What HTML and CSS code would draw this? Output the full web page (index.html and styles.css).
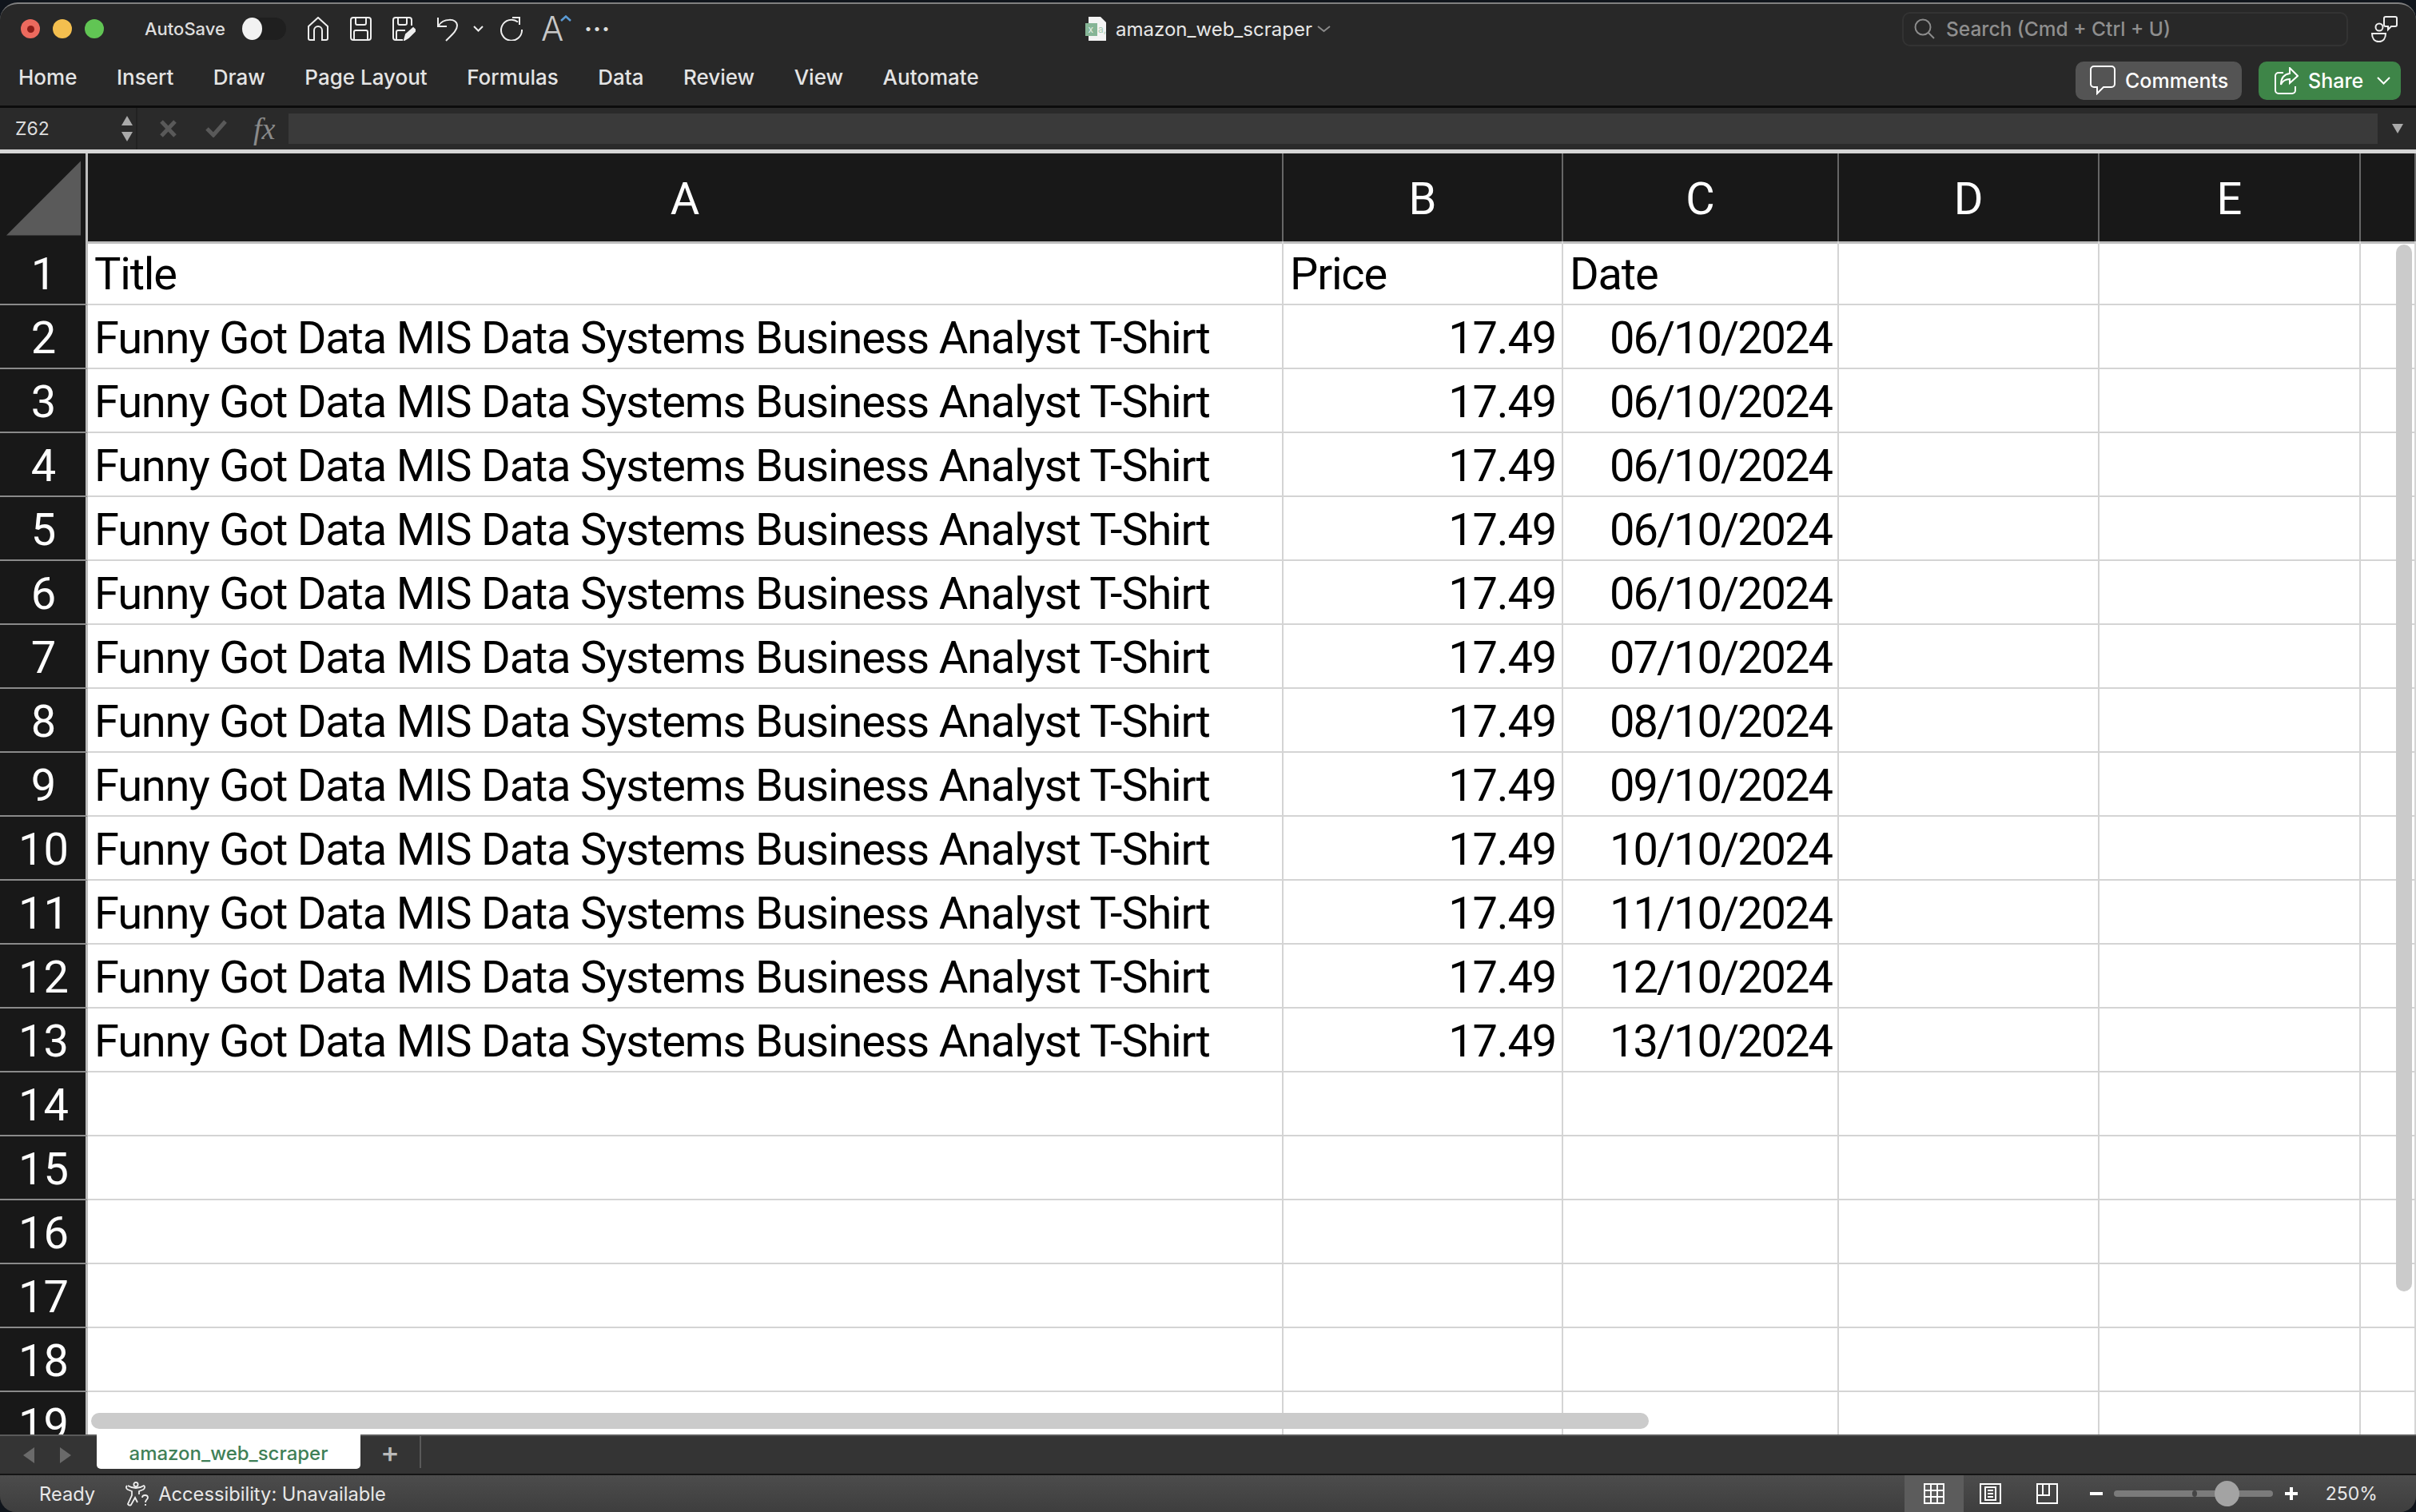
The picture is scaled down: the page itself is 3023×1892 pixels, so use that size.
FILE: index.html
```html
<!DOCTYPE html>
<html lang="en">
<head>
    <meta charset="UTF-8">
    <title>amazon_web_scraper</title>
    <link rel="stylesheet" href="styles.css">
</head>
<body>
<div class="window">
    <!-- title bar -->
    <div class="titlebar">
        <div class="title-left">
            <div class="lights">
                <span class="light red"><i></i></span>
                <span class="light yellow"></span>
                <span class="light green"></span>
            </div>
            <span class="autosave">AutoSave</span>
            <span class="toggle"><i></i></span>
            <div class="quick">
                <svg width="28" height="30" viewBox="0 0 28 30" fill="none" stroke="#eee" stroke-width="2"><path d="M2 12 14 1l12 11v15a2 2 0 0 1-2 2h-5V17a5 5 0 0 0-10 0v12H4a2 2 0 0 1-2-2z"/></svg>
                <svg width="27" height="30" viewBox="0 0 27 30" fill="none" stroke="#eee" stroke-width="2"><path d="M1 4a3 3 0 0 1 3-3h19a3 3 0 0 1 3 3v22a3 3 0 0 1-3 3H4a3 3 0 0 1-3-3z"/><path d="M7 1v7a2 2 0 0 0 2 2h9a2 2 0 0 0 2-2V1M5 29V19a2 2 0 0 1 2-2h13a2 2 0 0 1 2 2v10"/></svg>
                <svg width="29" height="30" viewBox="0 0 29 30" fill="none" stroke="#eee" stroke-width="2"><path d="M13 29H4a3 3 0 0 1-3-3V4a3 3 0 0 1 3-3h17a3 3 0 0 1 3 3v7"/><path d="M7 1v7a2 2 0 0 0 2 2h7a2 2 0 0 0 2-2V1M5 28V19a2 2 0 0 1 2-2h9"/><path d="M15 29l2-7 9-8 3 3-9 9z" fill="#eee"/></svg>
                <svg class="undo" width="28" height="32" viewBox="0 0 28 32" fill="none" stroke="#eee" stroke-width="2"><path d="M2 2v11h11"/><path d="M3 12C8 3 26 2 26 12c0 6-6 11-14 19"/></svg>
                <svg class="mini" width="13" height="8" viewBox="0 0 13 8" fill="none" stroke="#eee" stroke-width="2"><path d="m1 1 5.500 5.500L12 1"/></svg>
                <svg class="redo" width="28" height="30" viewBox="0 0 28 30" fill="none" stroke="#eee" stroke-width="2"><path d="M22 6.500A13 13 0 1 0 27 16"/><path d="M15 1h9v9"/></svg>
                <span class="font-up">A<svg width="14" height="8" viewBox="0 0 14 8" fill="none" stroke="#5b9bd5" stroke-width="2.500"><path d="m1 7 6-5.500L13 7"/></svg></span>
                <span class="dots">&middot;&middot;&middot;</span>
            </div>
        </div>
        <div class="doc-title">
            <svg width="27" height="30" viewBox="0 0 27 30"><path d="M4 0h15l7 7v23H4z" fill="#f4f4f4"/><rect y="8" width="15" height="16" fill="#86b596"/><text x="3.500" y="20" font-size="12" fill="#e8f2ea" font-family="Inter">x</text><text x="16" y="20" font-size="12" fill="#a6cdb2" font-family="Inter">a,</text></svg>
            <span>amazon_web_scraper</span>
            <svg width="17" height="9" viewBox="0 0 17 9" fill="none" stroke="#8a8a8a" stroke-width="2"><path d="m1 1 7.500 6L16 1"/></svg>
        </div>
        <div class="title-right">
            <div class="search">
                <svg width="26" height="26" viewBox="0 0 26 26" fill="none" stroke="#8c8c8c" stroke-width="2"><circle cx="11" cy="11" r="9.500"/><path d="m18 18 7 7"/></svg>
                <span>Search (Cmd + Ctrl + U)</span>
            </div>
            <svg width="33" height="33" viewBox="0 0 33 33" fill="none" stroke="#eee" stroke-width="2"><circle cx="10" cy="14" r="4.500"/><path d="M1 22h17c0 6-3 10-8.500 10S1 28 1 22z"/><path d="M18 1h12a2 2 0 0 1 2 2v8a2 2 0 0 1-2 2h-5l-4 4v-4h-3a2 2 0 0 1-2-2V3a2 2 0 0 1 2-2z"/></svg>
        </div>
    </div>

    <!-- ribbon tabs -->
    <div class="ribbon">
        <nav class="tabs">
            <span>Home</span><span>Insert</span><span>Draw</span><span>Page Layout</span><span>Formulas</span><span>Data</span><span>Review</span><span>View</span><span>Automate</span>
        </nav>
        <div class="ribbon-btns">
            <button class="btn comments">
                <svg width="32" height="37" viewBox="0 0 32 37" fill="none" stroke="#fff" stroke-width="2"><path d="M5 1h22a4 4 0 0 1 4 4v18a4 4 0 0 1-4 4H17l-8 8v-8H5a4 4 0 0 1-4-4V5a4 4 0 0 1 4-4z"/></svg>
                Comments
            </button>
            <button class="btn share">
                <svg width="30" height="34" viewBox="0 0 30 34" fill="none" stroke="#fff" stroke-width="2"><path d="M11 7H5a4 4 0 0 0-4 4v18a4 4 0 0 0 4 4h17a4 4 0 0 0 4-4v-5"/><path d="M19 1l10 10-10 9v-5c-6 0-9 2-11 7 0-8 4-13 11-14z"/></svg>
                Share
                <svg class="share-arrow" width="17" height="10" viewBox="0 0 17 10" fill="none" stroke="#fff" stroke-width="2"><path d="m1 1 7.500 7.500L16 1"/></svg>
            </button>
        </div>
    </div>

    <!-- formula bar -->
    <div class="formula">
        <div class="namebox">
            <span>Z62</span>
            <div class="spin"><i class="up"></i><i class="down"></i></div>
        </div>
        <div class="fx-btns">
            <svg width="21" height="22" viewBox="0 0 21 22" fill="none" stroke="#595959" stroke-width="5"><path d="m2 2 17 18M19 2 2 20"/></svg>
            <svg width="27" height="22" viewBox="0 0 27 22" fill="none" stroke="#595959" stroke-width="5"><path d="m2 11 8 8L25 2"/></svg>
            <span class="fx">fx</span>
        </div>
        <div class="formula-input"></div>
        <i class="formula-drop"></i>
    </div>

    <!-- sheet -->
    <div class="sheet">
        <div class="row head">
            <div class="rh corner"><svg width="96" height="96" viewBox="0 0 96 96"><path d="M96 0v96H0z" fill="#5a5a5a"/></svg></div>
            <div class="ch">A</div><div class="ch">B</div><div class="ch">C</div><div class="ch">D</div><div class="ch">E</div><div class="ch"></div>
        </div>
        <div class="row"><div class="rh">1</div><div class="c">Title</div><div class="c">Price</div><div class="c">Date</div><div class="c"></div><div class="c"></div><div class="c"></div></div>
        <div class="row"><div class="rh">2</div><div class="c">Funny Got Data MIS Data Systems Business Analyst T-Shirt</div><div class="c num">17.49</div><div class="c num date">06/10/2024</div><div class="c"></div><div class="c"></div><div class="c"></div></div>
        <div class="row"><div class="rh">3</div><div class="c">Funny Got Data MIS Data Systems Business Analyst T-Shirt</div><div class="c num">17.49</div><div class="c num date">06/10/2024</div><div class="c"></div><div class="c"></div><div class="c"></div></div>
        <div class="row"><div class="rh">4</div><div class="c">Funny Got Data MIS Data Systems Business Analyst T-Shirt</div><div class="c num">17.49</div><div class="c num date">06/10/2024</div><div class="c"></div><div class="c"></div><div class="c"></div></div>
        <div class="row"><div class="rh">5</div><div class="c">Funny Got Data MIS Data Systems Business Analyst T-Shirt</div><div class="c num">17.49</div><div class="c num date">06/10/2024</div><div class="c"></div><div class="c"></div><div class="c"></div></div>
        <div class="row"><div class="rh">6</div><div class="c">Funny Got Data MIS Data Systems Business Analyst T-Shirt</div><div class="c num">17.49</div><div class="c num date">06/10/2024</div><div class="c"></div><div class="c"></div><div class="c"></div></div>
        <div class="row"><div class="rh">7</div><div class="c">Funny Got Data MIS Data Systems Business Analyst T-Shirt</div><div class="c num">17.49</div><div class="c num date">07/10/2024</div><div class="c"></div><div class="c"></div><div class="c"></div></div>
        <div class="row"><div class="rh">8</div><div class="c">Funny Got Data MIS Data Systems Business Analyst T-Shirt</div><div class="c num">17.49</div><div class="c num date">08/10/2024</div><div class="c"></div><div class="c"></div><div class="c"></div></div>
        <div class="row"><div class="rh">9</div><div class="c">Funny Got Data MIS Data Systems Business Analyst T-Shirt</div><div class="c num">17.49</div><div class="c num date">09/10/2024</div><div class="c"></div><div class="c"></div><div class="c"></div></div>
        <div class="row"><div class="rh">10</div><div class="c">Funny Got Data MIS Data Systems Business Analyst T-Shirt</div><div class="c num">17.49</div><div class="c num date">10/10/2024</div><div class="c"></div><div class="c"></div><div class="c"></div></div>
        <div class="row"><div class="rh">11</div><div class="c">Funny Got Data MIS Data Systems Business Analyst T-Shirt</div><div class="c num">17.49</div><div class="c num date">11/10/2024</div><div class="c"></div><div class="c"></div><div class="c"></div></div>
        <div class="row"><div class="rh">12</div><div class="c">Funny Got Data MIS Data Systems Business Analyst T-Shirt</div><div class="c num">17.49</div><div class="c num date">12/10/2024</div><div class="c"></div><div class="c"></div><div class="c"></div></div>
        <div class="row"><div class="rh">13</div><div class="c">Funny Got Data MIS Data Systems Business Analyst T-Shirt</div><div class="c num">17.49</div><div class="c num date">13/10/2024</div><div class="c"></div><div class="c"></div><div class="c"></div></div>
        <div class="row"><div class="rh">14</div><div class="c"></div><div class="c"></div><div class="c"></div><div class="c"></div><div class="c"></div><div class="c"></div></div>
        <div class="row"><div class="rh">15</div><div class="c"></div><div class="c"></div><div class="c"></div><div class="c"></div><div class="c"></div><div class="c"></div></div>
        <div class="row"><div class="rh">16</div><div class="c"></div><div class="c"></div><div class="c"></div><div class="c"></div><div class="c"></div><div class="c"></div></div>
        <div class="row"><div class="rh">17</div><div class="c"></div><div class="c"></div><div class="c"></div><div class="c"></div><div class="c"></div><div class="c"></div></div>
        <div class="row"><div class="rh">18</div><div class="c"></div><div class="c"></div><div class="c"></div><div class="c"></div><div class="c"></div><div class="c"></div></div>
        <div class="row"><div class="rh">19</div><div class="c"></div><div class="c"></div><div class="c"></div><div class="c"></div><div class="c"></div><div class="c"></div></div>
        <div class="scroll-h"></div>
        <div class="scroll-v"></div>
    </div>

    <!-- sheet tabs -->
    <div class="sheetbar">
        <div class="arrows"><i class="left"></i><i class="right"></i></div>
        <div class="sheet-tab">amazon_web_scraper</div>
        <span class="add">+</span>
    </div>

    <!-- status bar -->
    <div class="status">
        <span class="ready">Ready</span>
        <svg class="a11y" width="31" height="31" viewBox="0 0 31 31" fill="none" stroke="#eee" stroke-width="1.800"><circle cx="14" cy="3.500" r="2.600"/><path d="M3 5C1 7 2 9 4 10l5 2v5L4 28c1 2 3 2 4 1l5-9 3 6M9 12"/><path d="M4 5c3 2 6 3 10 3s7-1 10-3c2 1 1 4-1 5l-5 2v4"/><path d="M22 20c0-4 7-4 7 0 0 2.500-3 2.500-3 6"/><path d="M26 28v2"/></svg>
        <span class="a11y-text">Accessibility: Unavailable</span>
        <div class="views">
            <div class="view active">
                <svg width="26" height="26" viewBox="0 0 26 26" fill="none" stroke="#fff" stroke-width="2"><path d="M1 1h24v24H1zM9 1v24M17 1v24M1 9h24M1 17h24"/></svg>
            </div>
            <div class="view">
                <svg width="27" height="26" viewBox="0 0 27 26" fill="none" stroke="#fff" stroke-width="2"><path d="M1 1h25v24H1zM7 5h13v16H7zM10 9h7M10 13h7M10 17h7"/></svg>
            </div>
            <div class="view">
                <svg width="27" height="26" viewBox="0 0 27 26" fill="none" stroke="#fff" stroke-width="2"><path d="M1 1h25v24H1zM1 15h15V1M8 1v14"/></svg>
            </div>
        </div>
        <div class="zoom">
            <i class="minus"></i>
            <div class="slider"><i class="tick"></i><i class="thumb"></i></div>
            <span class="plus"></span>
            <span class="pct">250%</span>
        </div>
    </div>
</div>
</body>
</html>
```

FILE: styles.css
```css
* {
    box-sizing: border-box;
}
html, body {
    margin: 0;
    padding: 0;
    height: 100%;
    overflow: hidden;
}
body {
    background: #10151c;
    font-family: Inter, "Liberation Sans", sans-serif;
}
i {
    display: block;
}
.window {
    height: 1889px;
    margin-top: 3px;
    display: flex;
    flex-direction: column;
    background: #282828;
    border-top: 2px solid #808080;
    border-radius: 22px 22px 20px 20px;
    overflow: hidden;
}

/* title bar */
.titlebar {
    height: 62px;
    display: grid;
    grid-template-columns: 1fr auto 1fr;
    align-items: center;
    color: #eee;
}
.title-left {
    display: flex;
    align-items: center;
    padding-left: 26px;
}
.lights {
    display: flex;
    gap: 16px;
}
.light {
    width: 24px;
    height: 24px;
    border-radius: 50%;
    display: flex;
    align-items: center;
    justify-content: center;
}
.light i {
    width: 9px;
    height: 9px;
    border-radius: 50%;
    background: #8c1d18;
}
.red { background: #ec6a5e; }
.yellow { background: #f4bf4f; }
.green { background: #61c554; }
.autosave {
    margin-left: 51px;
    font-size: 22px;
    font-weight: 500;
    color: #ddd;
}
.toggle {
    margin-left: 21px;
    width: 55px;
    height: 28px;
    border-radius: 14px;
    background: #1f1f1f;
}
.toggle i {
    width: 25px;
    height: 28px;
    border-radius: 50%;
    background: #f2f2f2;
}
.quick {
    margin-left: 26px;
    display: flex;
    align-items: center;
    gap: 26px;
}
.mini { margin-left: -8px; }
.redo { margin-left: -5px; }
.font-up {
    position: relative;
    margin-left: -3px;
    width: 30px;
    font-size: 42px;
    line-height: 34px;
    font-weight: 300;
    color: #c8c8c8;
}
.font-up svg {
    position: absolute;
    top: 0;
    right: -8px;
}
.dots {
    margin-left: -2px;
    font-size: 30px;
    line-height: 24px;
    font-weight: 700;
    letter-spacing: 1px;
    color: #ddd;
}
.doc-title {
    display: flex;
    align-items: center;
    font-size: 24px;
    color: #e6e6e6;
}
.doc-title span {
    margin: 0 6px 0 11px;
}
.title-right {
    display: flex;
    align-items: center;
    justify-content: flex-end;
    padding-right: 23px;
    gap: 29px;
}
.search {
    width: 558px;
    height: 43px;
    display: flex;
    align-items: center;
    gap: 14px;
    padding-left: 13px;
    border: 2px solid #333;
    border-radius: 10px;
    font-size: 24.500px;
    font-weight: 500;
    color: #8f8f8f;
}

/* ribbon */
.ribbon {
    height: 65px;
    display: flex;
    align-items: center;
    justify-content: space-between;
    padding: 0 19px 0 23px;
}
.tabs {
    display: flex;
    gap: 49.500px;
    padding-bottom: 6px;
    font-size: 26px;
    font-weight: 500;
    color: #e4e4e4;
}
.ribbon-btns {
    display: flex;
    gap: 21px;
    padding-top: 2px;
}
.btn {
    height: 48px;
    display: flex;
    align-items: center;
    border: 0;
    border-radius: 10px;
    color: #fff;
    font-family: inherit;
    font-size: 25px;
    font-weight: 500;
}
.comments {
    width: 208px;
    gap: 12px;
    padding: 0 0 0 18px;
    background: #545454;
}
.share {
    width: 178px;
    gap: 12px;
    padding: 0 0 0 20px;
    background: #3e8548;
}
.share-arrow { margin-left: 5px; }

/* formula bar */
.formula {
    height: 60px;
    display: flex;
    align-items: center;
    background: #2a2a2a;
    border-top: 3px solid #0c0c0c;
    border-bottom: 5px solid #d6d6d6;
}
.namebox {
    width: 172px;
    height: 100%;
    display: flex;
    align-items: center;
    justify-content: space-between;
    padding: 0 4px 0 19px;
    border-right: 2px solid #222;
    font-size: 23px;
    color: #ddd;
}
.spin i {
    width: 0;
    height: 0;
    border-left: 7px solid transparent;
    border-right: 7px solid transparent;
}
.spin .up {
    border-bottom: 12px solid #aaa;
    margin-bottom: 8px;
}
.spin .down {
    border-top: 12px solid #aaa;
}
.fx-btns {
    width: 189px;
    display: flex;
    align-items: center;
    gap: 36px;
    padding-left: 28px;
}
.fx {
    margin-left: -3px;
    font-family: "Liberation Serif", serif;
    font-style: italic;
    font-size: 38px;
    color: #8a8a8a;
}
.formula-input {
    width: 2614px;
    height: 38px;
    background: #3a3a3a;
}
.formula-drop {
    margin-left: 18px;
    width: 0;
    height: 0;
    border-left: 7px solid transparent;
    border-right: 7px solid transparent;
    border-top: 12px solid #aaa;
}

/* sheet */
.sheet {
    position: relative;
    height: 1603px;
    flex-shrink: 0;
    background: #fff;
    overflow: hidden;
}
.row {
    height: 80px;
    display: grid;
    grid-template-columns: 110px 1496px 350px 345px 326px 327px 1fr;
    font-family: Roboto, "Liberation Sans", sans-serif;
    font-size: 56px;
    color: #000;
}
.row.head {
    height: 110px;
}
.rh {
    display: flex;
    align-items: center;
    justify-content: center;
    padding: 4px 0 0 2px;
    background: #181818;
    color: #fff;
    border-right: 3px solid #bdbdbd;
    border-bottom: 2px solid #8a8a8a;
}
.ch {
    display: flex;
    align-items: center;
    justify-content: center;
    padding-top: 4px;
    background: #181818;
    color: #fff;
    border-right: 2px solid #666;
    border-bottom: 3px solid #bdbdbd;
}
.rh.corner {
    padding: 8px 6px 6px 8px;
    border-bottom: 3px solid #bdbdbd;
}
.c {
    display: flex;
    align-items: center;
    padding: 3px 7px 0 8px;
    letter-spacing: -1.200px;
    white-space: nowrap;
    border-right: 2px solid #d4d4d4;
    border-bottom: 2px solid #d4d4d4;
}
.c.num {
    justify-content: flex-end;
}
.c.date {
    letter-spacing: -2px;
}
.scroll-h {
    position: absolute;
    left: 114px;
    bottom: 7px;
    width: 1949px;
    height: 20px;
    border-radius: 10px;
    background: #cbcbcb;
}
.scroll-v {
    position: absolute;
    right: 5px;
    top: 114px;
    width: 20px;
    height: 1310px;
    border-radius: 10px;
    background: #cbcbcb;
}

/* sheet tabs */
.sheetbar {
    height: 51px;
    flex-shrink: 0;
    display: flex;
    align-items: flex-start;
    background: #343434;
    border-top: 2px solid #5a5a5a;
    border-bottom: 2px solid #141414;
}
.arrows {
    width: 121px;
    height: 100%;
    display: flex;
    align-items: center;
    gap: 32px;
    padding-left: 29px;
}
.arrows i {
    width: 0;
    height: 0;
    border-top: 10px solid transparent;
    border-bottom: 10px solid transparent;
}
.arrows .left { border-right: 14px solid #6a6a6a; }
.arrows .right { border-left: 14px solid #6a6a6a; }
.sheet-tab {
    width: 330px;
    height: 43px;
    margin-top: -2px;
    padding-top: 3px;
    display: flex;
    align-items: center;
    justify-content: center;
    background: #fff;
    border-radius: 0 0 5px 5px;
    font-size: 24px;
    font-weight: 500;
    color: #3f8057;
}
.add {
    width: 76px;
    height: 40px;
    display: flex;
    align-items: center;
    justify-content: center;
    border-right: 2px solid #5a5a5a;
    font-size: 36px;
    font-weight: 500;
    color: #bbb;
}

/* status bar */
.status {
    flex: 1;
    display: flex;
    align-items: center;
    background: linear-gradient(#4c4c4c, #3e3e3e);
    font-size: 23.700px;
    color: #e8e8e8;
}
.ready { margin-left: 49px; }
.a11y { margin-left: 37px; }
.a11y-text { margin-left: 11px; }
.views {
    margin-left: 1900px;
    height: 100%;
    display: flex;
}
.view {
    width: 74px;
    height: 100%;
    display: flex;
    align-items: center;
    justify-content: center;
    margin-right: -3px;
}
.view.active {
    background: #5c5c5c;
}
.zoom {
    margin-left: 19px;
    display: flex;
    align-items: center;
}
.minus {
    width: 16px;
    height: 4px;
    background: #fff;
}
.slider {
    position: relative;
    margin-left: 14px;
    width: 199px;
    height: 8px;
    border-radius: 4px;
    background: #7b7b7b;
}
.tick {
    position: absolute;
    left: 98px;
    top: 0;
    width: 6px;
    height: 8px;
    border-radius: 50%;
    background: #444;
}
.thumb {
    position: absolute;
    left: 126px;
    top: -12px;
    width: 31px;
    height: 32px;
    border-radius: 50%;
    background: #a3a3a3;
}
.plus {
    position: relative;
    margin-left: 15px;
    width: 16px;
    height: 4px;
    background: #fff;
}
.plus::after {
    content: "";
    position: absolute;
    left: 6px;
    top: -6px;
    width: 4px;
    height: 16px;
    background: #fff;
}
.pct {
    margin-left: 35px;
    font-size: 23px;
}
```
